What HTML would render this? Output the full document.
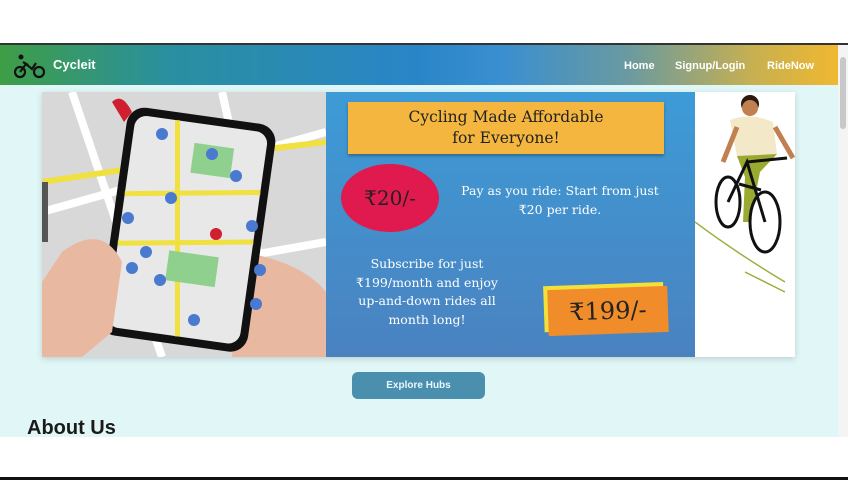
<!DOCTYPE html>
<html><head><meta charset="utf-8"><style>
*{margin:0;padding:0;box-sizing:border-box}
body{width:848px;height:480px;overflow:hidden;background:#fff;font-family:"Liberation Sans",sans-serif;position:relative}
.top{position:absolute;top:0;left:0;width:848px;height:43px;background:#fff}
.line{position:absolute;top:43px;left:0;width:848px;height:2px;background:#333}
.nav{position:absolute;top:45px;left:0;width:838px;height:40px;background:linear-gradient(90deg,#3e9e45 0%,#2a8fa0 20%,#2a85c8 50%,#3a8fd0 60%,#6a9aa0 75%,#c8b050 90%,#f0b830 100%);color:#fff}
.nav .brand{position:absolute;left:53px;top:12px;font-weight:bold;font-size:13px}
.nav a{position:absolute;top:14px;font-size:11px;font-weight:bold;color:#fff;text-decoration:none;line-height:14px}
.main{position:absolute;top:85px;left:0;width:838px;height:352px;background:#e0f6f7}
.sb{position:absolute;top:45px;left:838px;width:10px;height:392px;background:#f4f4f4}
.sb div{position:absolute;left:2px;top:12px;width:6px;height:72px;background:#c8c8c8;border-radius:3px}
.banner{position:absolute;left:42px;top:92px;width:753px;height:265px;box-shadow:0 2px 6px rgba(0,0,0,.15)}
.map{position:absolute;left:0;top:0;width:284px;height:265px;background:#ddd;overflow:hidden}
.blue{position:absolute;left:284px;top:0;width:369px;height:265px;background:linear-gradient(180deg,#3d9bd6,#4a82c0);color:#fff;font-family:"DejaVu Serif",serif}
.white{position:absolute;left:653px;top:0;width:100px;height:265px;background:#fff}
.tape{position:absolute;left:22px;top:10px;width:316px;height:52px;background:#f4b63e;color:#222;text-align:center;font-size:15.5px;line-height:21px;padding-top:5px;box-shadow:0 2px 3px rgba(0,0,0,.3)}
.badge{position:absolute;left:18px;top:75px;width:92px;height:62px;background:#e0194f;border-radius:50%;color:#222;font-size:20px;text-align:center;line-height:62px;box-shadow:0 0 0 3px #e0194f}
.t1{position:absolute;left:130px;top:89px;width:208px;text-align:center;font-size:12.5px;line-height:19px}
.t2{position:absolute;left:30px;top:163px;width:142px;text-align:center;font-size:12.5px;line-height:18.5px}
.p199{position:absolute;left:222px;top:196px;width:120px;height:46px;background:#f08c2a;color:#222;font-size:24px;text-align:center;line-height:46px;transform:rotate(-2deg);box-shadow:-4px -4px 0 #f5e03a}
.btn{position:absolute;left:352px;top:372px;width:133px;height:27px;background:#4a8fae;border-radius:6px;color:#e8f8ff;font-size:10px;font-weight:bold;text-align:center;line-height:27px}
.about{position:absolute;left:27px;top:417px;font-size:20px;font-weight:bold;color:#1a1a1a}
.bot{position:absolute;left:0;top:477px;width:848px;height:3px;background:#111}
</style></head><body>
<div class="top"></div><div class="line"></div>
<div class="nav">
<svg style="position:absolute;left:14px;top:8px" width="32" height="26" viewBox="0 0 32 26" fill="none" stroke="#111" stroke-width="2.2"><circle cx="7" cy="4" r="2.5" fill="#111" stroke="none"/><circle cx="6" cy="19" r="5"/><circle cx="25" cy="19" r="5"/><path d="M6 19l6-8 6 5 4-6M9 9l5 3"/></svg>
<span class="brand">Cycleit</span>
<a style="left:624px">Home</a><a style="left:675px">Signup/Login</a><a style="left:767px">RideNow</a>
</div>
<div class="main"></div>
<div class="sb"><div></div></div>
<div class="banner">
<div class="map">
<svg width="284" height="265" viewBox="0 0 284 265">
<rect width="284" height="265" fill="#d8d8d8"/>
<path d="M0 120L284 40M30 0L120 265M0 200L284 150M180 0L240 265" stroke="#fff" stroke-width="8"/>
<path d="M0 90L200 60L284 50" stroke="#f0e040" stroke-width="6"/>
<rect x="0" y="90" width="6" height="60" fill="#555"/>
<path d="M70 10Q80 0 90 20L82 30Z" fill="#d02030"/>
<path d="M200 160Q260 170 284 200L284 265L190 265Z" fill="#e8b8a0"/>
<g transform="rotate(8 140 140)"><rect x="70" y="22" width="150" height="230" rx="18" fill="#111"/><rect x="78" y="30" width="134" height="214" rx="12" fill="#e8e8e8"/>
<path d="M78 110L212 90M78 160L212 140M120 30L150 244" stroke="#f0e040" stroke-width="5"/>
<rect x="140" y="50" width="40" height="30" fill="#8fd08f"/><rect x="130" y="160" width="50" height="30" fill="#8fd08f"/></g>
<g fill="#4a7ad0"><circle cx="120" cy="42" r="6"/><circle cx="170" cy="62" r="6"/><circle cx="194" cy="84" r="6"/><circle cx="129" cy="106" r="6"/><circle cx="86" cy="126" r="6"/><circle cx="104" cy="160" r="6"/><circle cx="90" cy="176" r="6"/><circle cx="118" cy="188" r="6"/><circle cx="210" cy="134" r="6"/><circle cx="218" cy="178" r="6"/><circle cx="214" cy="212" r="6"/><circle cx="152" cy="228" r="6"/></g>
<circle cx="174" cy="142" r="6" fill="#d02030"/>
<path d="M20 160Q60 130 80 170L70 240L40 265L0 265L0 190Z" fill="#e8b8a0"/>
</svg></div>
<div class="blue">
<div class="tape">Cycling Made Affordable<br>for Everyone!</div>
<div class="badge">₹20/-</div>
<div class="t1">Pay as you ride: Start from just ₹20 per ride.</div>
<div class="t2">Subscribe for just ₹199/month and enjoy up-and-down rides all month long!</div>
<div class="p199">₹199/-</div>
</div>
<div class="white">
<svg width="100" height="265" viewBox="0 0 100 265">
<circle cx="55" cy="12" r="9" fill="#2a1a10"/><circle cx="55" cy="16" r="8" fill="#c08050"/>
<path d="M35 28Q55 20 78 30L82 62L42 64Z" fill="#f3e8c8"/>
<path d="M42 64L82 62L65 80L55 130L48 130L50 85Z" fill="#9aaa30"/>
<path d="M42 35L28 70M80 35L98 66" stroke="#c08050" stroke-width="5"/>
<g fill="none" stroke="#111" stroke-width="3"><ellipse cx="33" cy="110" rx="12" ry="25"/><ellipse cx="70" cy="130" rx="15" ry="30"/><path d="M33 110L52 70L70 130M52 70L92 66M44 92L66 98"/></g>
<path d="M0 130Q40 160 90 190M50 180L90 200" stroke="#9ab040" stroke-width="1.5" fill="none"/>
</svg></div>
</div>
<div class="btn">Explore Hubs</div>
<div class="about">About Us</div>
<div class="bot"></div>
</body></html>
